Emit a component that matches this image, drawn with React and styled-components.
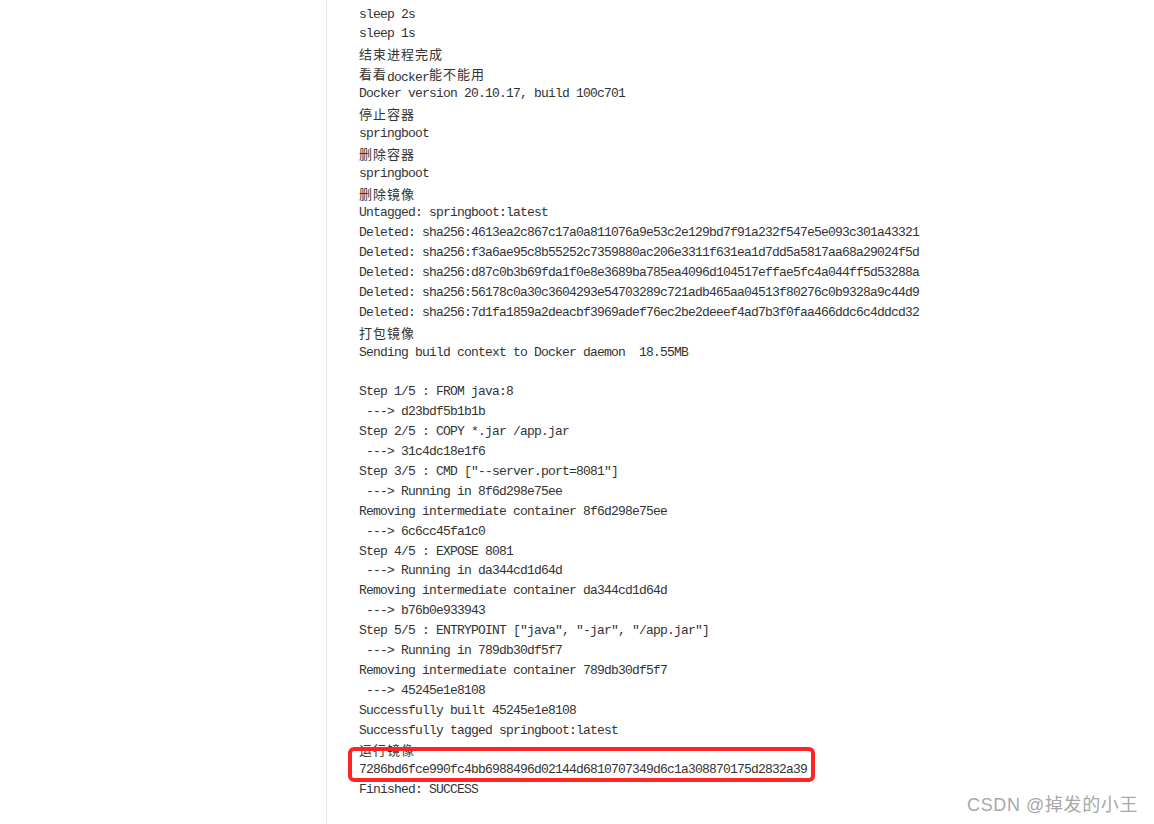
import React from "react";
import styled, { createGlobalStyle } from "styled-components";

const Global = createGlobalStyle`
  html, body { margin: 0; padding: 0; background: #ffffff; overflow: hidden; }
  #root { min-height: 100vh; }
`;

const Page = styled.div`
  display: flex;
  min-height: 100vh;
  background: #ffffff;
  position: relative;
`;

const Side = styled.aside`
  width: 326px;
  flex: none;
  border-right: 1px solid #e9e9e9;
`;

const Console = styled.pre`
  margin: 0;
  padding: 4.5px 0 0 32px;
  font-family: "Liberation Mono", "DejaVu Sans Mono", monospace;
  font-size: 13px;
  letter-spacing: -0.8px;
  line-height: 19.9px;
  color: #333333;
  white-space: pre;
`;

const Line = styled.div`
  position: relative;
  height: 19.9px;
`;

const Cjk = styled.span`
  font-family: "Noto Sans CJK SC", sans-serif;
  font-size: 13px;
  letter-spacing: 1px;
  vertical-align: 1.5px;
`;

const Highlight = styled.div`
  position: absolute;
  left: -11px;
  top: -13px;
  width: 467px;
  height: 35px;
  box-sizing: border-box;
  border: 4px solid #ff2424;
  border-radius: 6px;
  pointer-events: none;
`;

const Watermark = styled.div`
  position: absolute;
  right: 16px;
  bottom: 8px;
  font-family: "Liberation Sans", "Noto Sans CJK SC", sans-serif;
  font-size: 18px;
  letter-spacing: 0.6px;
  color: #a8a8a8;
  text-shadow: 0 0 1px #ffffff;
`;

const lines = [
  "sleep 2s",
  "sleep 1s",
  "结束进程完成",
  "看看docker能不能用",
  "Docker version 20.10.17, build 100c701",
  "停止容器",
  "springboot",
  "删除容器",
  "springboot",
  "删除镜像",
  "Untagged: springboot:latest",
  "Deleted: sha256:4613ea2c867c17a0a811076a9e53c2e129bd7f91a232f547e5e093c301a43321",
  "Deleted: sha256:f3a6ae95c8b55252c7359880ac206e3311f631ea1d7dd5a5817aa68a29024f5d",
  "Deleted: sha256:d87c0b3b69fda1f0e8e3689ba785ea4096d104517effae5fc4a044ff5d53288a",
  "Deleted: sha256:56178c0a30c3604293e54703289c721adb465aa04513f80276c0b9328a9c44d9",
  "Deleted: sha256:7d1fa1859a2deacbf3969adef76ec2be2deeef4ad7b3f0faa466ddc6c4ddcd32",
  "打包镜像",
  "Sending build context to Docker daemon  18.55MB",
  "",
  "Step 1/5 : FROM java:8",
  " ---> d23bdf5b1b1b",
  "Step 2/5 : COPY *.jar /app.jar",
  " ---> 31c4dc18e1f6",
  'Step 3/5 : CMD ["--server.port=8081"]',
  " ---> Running in 8f6d298e75ee",
  "Removing intermediate container 8f6d298e75ee",
  " ---> 6c6cc45fa1c0",
  "Step 4/5 : EXPOSE 8081",
  " ---> Running in da344cd1d64d",
  "Removing intermediate container da344cd1d64d",
  " ---> b76b0e933943",
  'Step 5/5 : ENTRYPOINT ["java", "-jar", "/app.jar"]',
  " ---> Running in 789db30df5f7",
  "Removing intermediate container 789db30df5f7",
  " ---> 45245e1e8108",
  "Successfully built 45245e1e8108",
  "Successfully tagged springboot:latest",
  "运行镜像",
  "7286bd6fce990fc4bb6988496d02144d6810707349d6c1a308870175d2832a39",
  "Finished: SUCCESS",
];

const HIGHLIGHT_INDEX = 38;

function renderText(text) {
  const parts = text.split(/([\u3000-\u9fff]+)/);
  return parts.map((p, i) =>
    /[\u3000-\u9fff]/.test(p) ? <Cjk key={i}>{p}</Cjk> : p
  );
}

export default function App() {
  return (
    <Page>
      <Global />
      <Side />
      <Console>
        {lines.map((t, i) => (
          <Line key={i}>
            {t ? renderText(t) : " "}
            {i === HIGHLIGHT_INDEX && <Highlight />}
          </Line>
        ))}
      </Console>
      <Watermark>CSDN @掉发的小王</Watermark>
    </Page>
  );
}
